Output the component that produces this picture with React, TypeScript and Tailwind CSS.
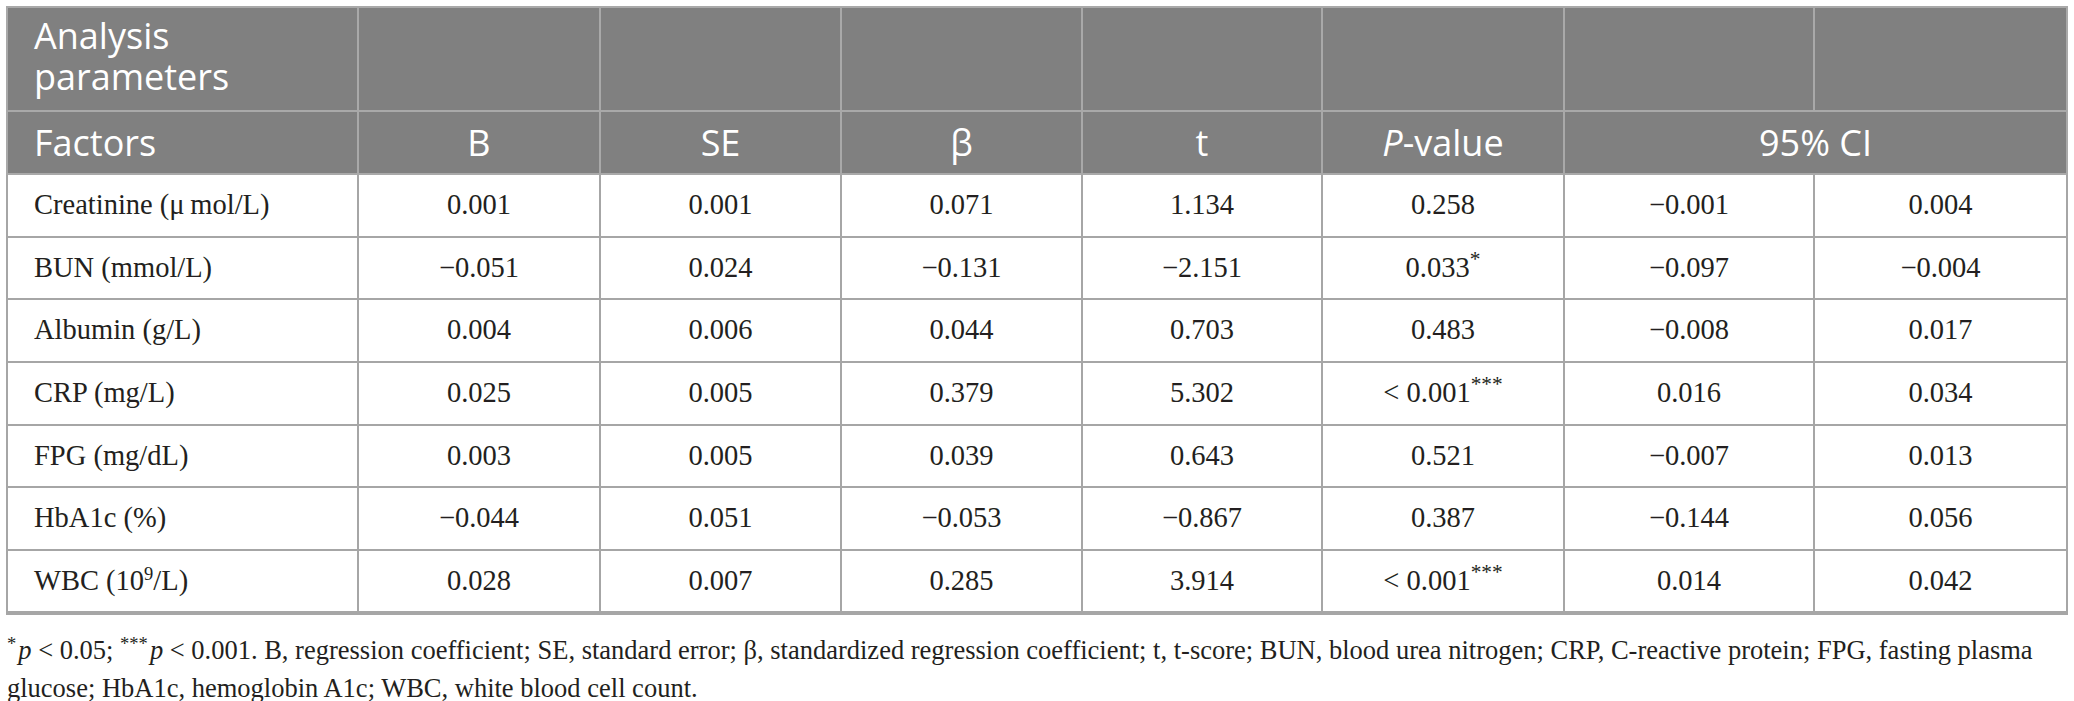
import React from 'react';

type Row = {
  factor: React.ReactNode;
  b: string;
  se: string;
  beta: string;
  t: string;
  p: React.ReactNode;
  lo: string;
  hi: string;
};

const rows: Row[] = [
  { factor: 'Creatinine (\u03BC\u2009mol/L)', b: '0.001', se: '0.001', beta: '0.071', t: '1.134', p: '0.258', lo: '\u22120.001', hi: '0.004' },
  { factor: 'BUN (mmol/L)', b: '\u22120.051', se: '0.024', beta: '\u22120.131', t: '\u22122.151', p: <>0.033<sup className="text-[0.75em]">*</sup></>, lo: '\u22120.097', hi: '\u22120.004' },
  { factor: 'Albumin (g/L)', b: '0.004', se: '0.006', beta: '0.044', t: '0.703', p: '0.483', lo: '\u22120.008', hi: '0.017' },
  { factor: 'CRP (mg/L)', b: '0.025', se: '0.005', beta: '0.379', t: '5.302', p: <>&lt; 0.001<sup className="text-[0.75em]">***</sup></>, lo: '0.016', hi: '0.034' },
  { factor: 'FPG (mg/dL)', b: '0.003', se: '0.005', beta: '0.039', t: '0.643', p: '0.521', lo: '\u22120.007', hi: '0.013' },
  { factor: 'HbA1c (%)', b: '\u22120.044', se: '0.051', beta: '\u22120.053', t: '\u22120.867', p: '0.387', lo: '\u22120.144', hi: '0.056' },
  { factor: <>WBC (10<sup className="text-[0.65em]">9</sup>/L)</>, b: '0.028', se: '0.007', beta: '0.285', t: '3.914', p: <>&lt; 0.001<sup className="text-[0.75em]">***</sup></>, lo: '0.014', hi: '0.042' },
];

const head = 'border-2 border-[#a9a9a9] bg-[#808080] text-white font-normal';
const cell = 'border-2 border-[#a6a6a6] text-center';

export default function App() {
  return (
    <div
      className="bg-white pt-[6px] pl-[6px] pr-[8px] text-[#231f20]"
      style={{ fontFamily: '"Liberation Serif", "Times New Roman", serif' }}
    >
      <table className="w-[2060px] table-fixed border-collapse border-2 border-[#a6a6a6]">
        <colgroup>
          <col className="w-[351px]" />
          <col className="w-[242px]" />
          <col className="w-[241px]" />
          <col className="w-[241px]" />
          <col className="w-[240px]" />
          <col className="w-[242px]" />
          <col className="w-[250px]" />
          <col className="w-[253px]" />
        </colgroup>
        <thead className="font-['Open_Sans',sans-serif] text-[36px] leading-[41px]">
          <tr className="h-[104px]">
            <th className={`${head} text-left align-top pl-[26px] pt-[7px]`}>
              Analysis
              <br />
              parameters
            </th>
            <th className={head}></th>
            <th className={head}></th>
            <th className={head}></th>
            <th className={head}></th>
            <th className={head}></th>
            <th className={head}></th>
            <th className={head}></th>
          </tr>
          <tr className="h-[63px]">
            <th className={`${head} text-left pl-[26px]`}>Factors</th>
            <th className={head}>B</th>
            <th className={head}>SE</th>
            <th className={head}>&beta;</th>
            <th className={head}>t</th>
            <th className={head}>
              <i>P</i>-value
            </th>
            <th className={head} colSpan={2}>
              95% CI
            </th>
          </tr>
        </thead>
        <tbody className="text-[28.5px]">
          {rows.map((r, i) => (
            <tr key={i} className={`h-[62.7px] ${i === rows.length - 1 ? 'border-b-4 border-[#a6a6a6]' : ''}`}>
              <td className="border-2 border-[#a6a6a6] pl-[26px]">{r.factor}</td>
              <td className={cell}>{r.b}</td>
              <td className={cell}>{r.se}</td>
              <td className={cell}>{r.beta}</td>
              <td className={cell}>{r.t}</td>
              <td className={cell}>{r.p}</td>
              <td className={cell}>{r.lo}</td>
              <td className={cell}>{r.hi}</td>
            </tr>
          ))}
        </tbody>
      </table>
      <p className="mt-[16px] pl-[1px] text-[26.5px] leading-[38px]">
        <sup className="mr-[2px] text-[0.7em] leading-none">*</sup>
        <i>p</i>&#8197;&lt;&#8197;0.05; <sup className="mr-[2px] text-[0.7em] leading-none">***</sup>
        <i>p</i>&#8197;&lt;&#8197;0.001. B, regression coefficient; SE, standard error; &beta;, standardized regression
        coefficient; t, t-score; BUN, blood urea nitrogen; CRP, C-reactive protein; FPG, fasting plasma glucose; HbA1c,
        hemoglobin A1c; WBC, white blood cell count.
      </p>
    </div>
  );
}
